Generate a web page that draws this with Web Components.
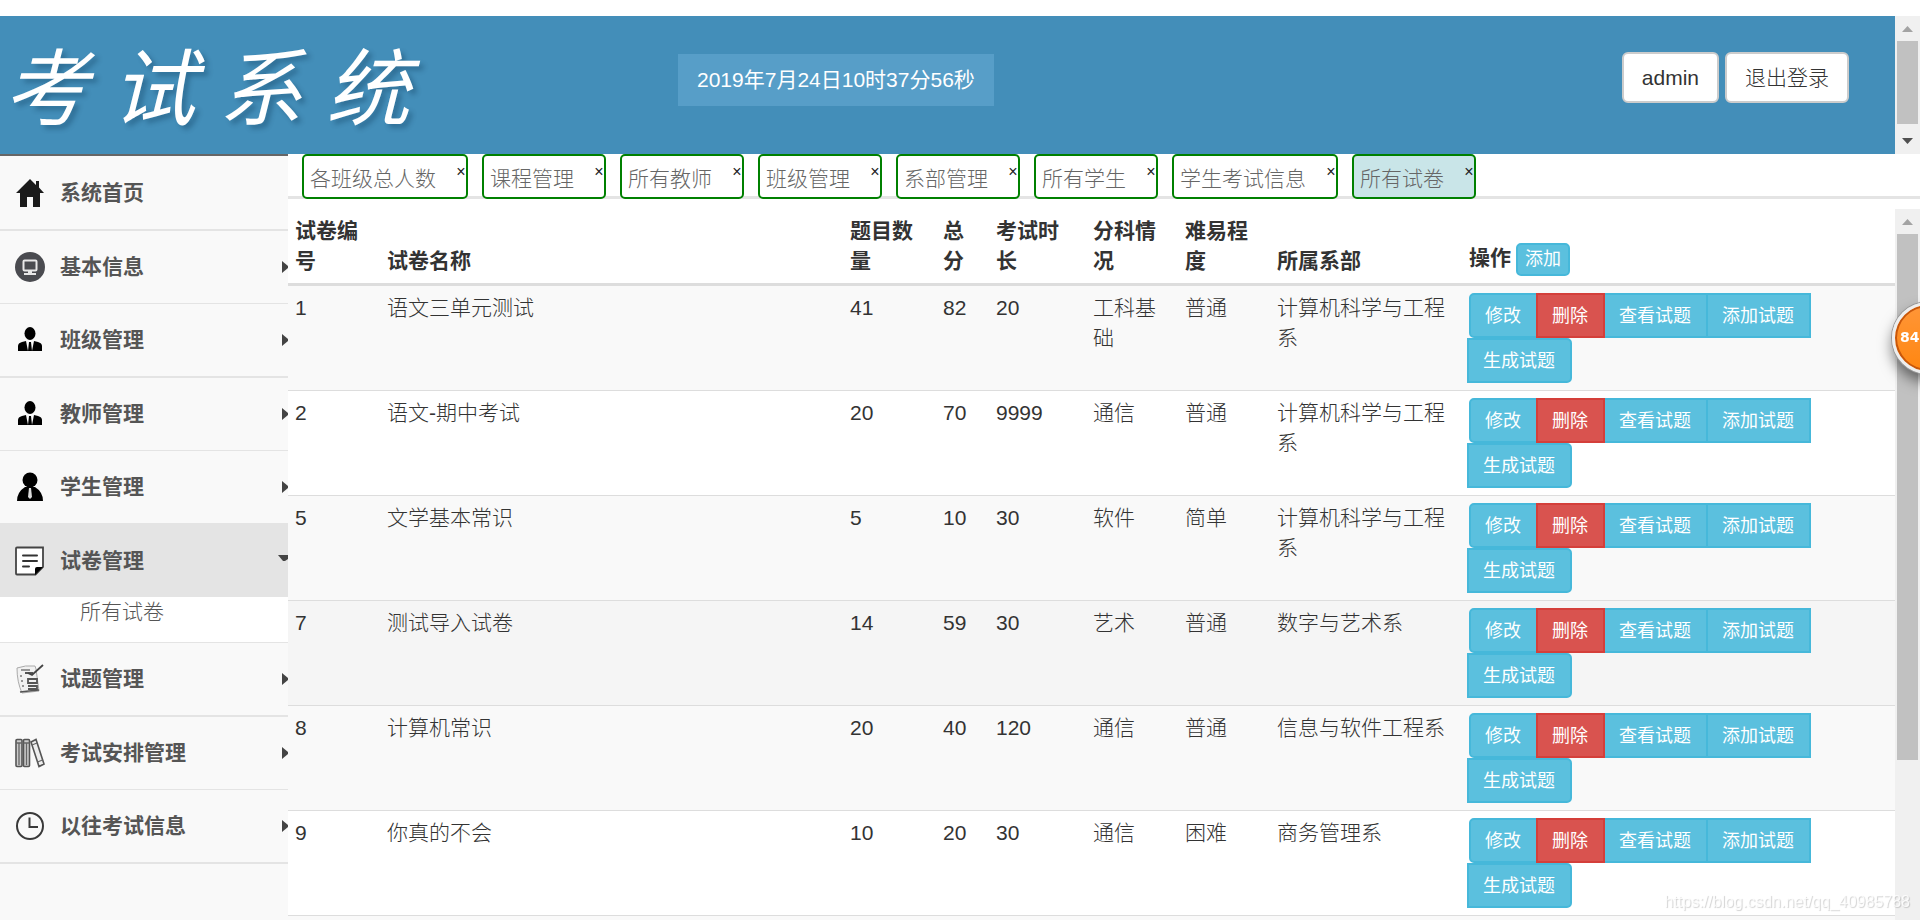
<!DOCTYPE html>
<html lang="zh-CN">
<head>
<meta charset="utf-8">
<title>考试系统</title>
<style>
html, body { margin: 0; height: 100%; overflow: hidden; }
body {
  font: 300 21px/30px "Liberation Sans", "Noto Sans CJK SC", sans-serif;
  color: #333;
  background: #fff;
}
</style>
</head>
<body>
<exam-app></exam-app>
<script>
const define = (name, html, setup) => {
  const tpl = document.createElement('template');
  tpl.innerHTML = html;
  customElements.define(name, class extends HTMLElement {
    connectedCallback() {
      if (this.shadowRoot) return;
      this.attachShadow({ mode: 'open' }).append(tpl.content.cloneNode(true));
      if (setup) setup(this, this.shadowRoot);
    }
  });
};

/* Scroll track with arrows; --thumb and --rest give the proportions */
define('scroll-track', `
<style>
:host { display: flex; flex-direction: column; flex: none; width: 25px; background: #f0f0f0; }
svg { display: block; flex: none; width: 25px; height: 25px; }
.thumb { flex: var(--thumb, 1) 1 0; margin: 0 2px; background: #c1c1c1; }
.rest { flex: var(--rest, 0) 1 0; }
.end { height: 30px; }
:host([no-end]) .end { display: none; }
</style>
<svg viewBox="0 0 25 25" aria-hidden="true"><path d="M7 16l5.500-6L18 16z" fill="#a3a3a3"/></svg>
<div class="thumb"></div>
<div class="rest"></div>
<svg class="end" viewBox="0 0 25 30" aria-hidden="true"><path d="M7 14h11l-5.500 6z" fill="#505050"/></svg>
`);

define('app-header', `
<style>
:host { display: flex; flex: none; height: 138px; background: #438eb9; }
.bar { flex: 1; min-width: 0; display: grid; grid-template-columns: 678fr 1217fr; }
h1 {
  margin: 0; padding: 26px 0 0 4px; font-size: 84px; line-height: 96px; height: 96px;
  font-style: italic; font-weight: 400; color: #fff; white-space: nowrap;
  text-shadow: 4px 4px 5px rgba(0,40,70,.3);
}
.right { display: flex; justify-content: space-between; align-items: flex-start; padding: 36px 46px 0 0; }
time { margin-top: 2px; padding: 11px 19px; background: #579ec8; color: #fff; font-weight: 400; white-space: nowrap; }
.actions { display: flex; gap: 6px; }
button {
  font: inherit; color: #333; background: #fff; border: 2px solid #ccc; border-radius: 6px;
  padding: 0 18px; height: 51px;
}
</style>
<div class="bar">
  <h1>考 试 系 统</h1>
  <div class="right">
    <time datetime="2019-07-24T10:37:56">2019年7月24日10时37分56秒</time>
    <div class="actions"><button type="button">admin</button><button type="button">退出登录</button></div>
  </div>
</div>
<scroll-track></scroll-track>
`);

const ICONS = {
  home: '<path d="M15 1L1 15h4v14h7V19h6v10h7V15h4l-5-5.500V3h-3v4z" fill="#1b1b1b"/>',
  info: '<circle cx="15" cy="15" r="15" fill="#4a4b50"/><rect x="8.500" y="8.500" width="13" height="10" rx="1" fill="none" stroke="#e8e8e8" stroke-width="2"/><path d="M13 19h4v2h4v2H9v-2h4z" fill="#e8e8e8"/>',
  person: '<ellipse cx="15" cy="8.500" rx="5.500" ry="6.500"/><path d="M3 26v-5q0-3 4-4l4-1 2 10zM27 26v-5q0-3-4-4l-4-1-2 10zM14 17h2l1 9h-4z"/>',
  student: '<circle cx="15" cy="8" r="7.500"/><path d="M2 29q0-9 8-14h10q8 5 8 14z"/><path d="M14 16h2l1 9-2 2-2-2z" fill="#ddd"/>',
  paper: '<path d="M2 1.500h26V21l-7.500 7.500H2q-1 0-1-1v-25q0-1 1-1z" fill="#fff" stroke="#444" stroke-width="1.800"/><path d="M28 21l-8 8v-6q0-2 2-2z" fill="#000"/><path d="M8 9.500h14M8 15h14M8 20.500h6" stroke="#333" stroke-width="2" stroke-linecap="round"/>',
  quiz: '<path d="M2 4q8-3 18-2l1 3 3 22-17 2Q2 18 2 4z" fill="#f1f1f1" stroke="#aaa"/><path d="M5 28q8-1 19-2" fill="none" stroke="#555" stroke-width="1.500"/><path d="M10 9h8M13 15h9v4h-9zM13 22h9v3h-9" fill="none" stroke="#555" stroke-width="1.800"/><path d="M5 12h2M6 17h2M7 22h2M6 6h9" stroke="#777" stroke-width="1.500"/><path d="M28 1L17 11l-4-2" fill="none" stroke="#444" stroke-width="1.800"/>',
  books: '<g fill="#ccc" stroke="#555" stroke-width="1.600"><rect x="1" y="1.500" width="6" height="27" rx="1"/><rect x="8.500" y="1.500" width="6" height="27" rx="1"/><path d="M16 4l5-2.500 8 24.500-5 2.500z" fill="#eee"/></g><path d="M1 5h6M8.500 5h6M17 7l5-2M22.500 24l5-2M4 5v22M11.500 5v22" stroke="#666" stroke-width="1.300"/>',
  clock: '<circle cx="15" cy="15" r="13" fill="none" stroke="#3a3a3a" stroke-width="2"/><path d="M14.500 6.500v9.500H23" fill="none" stroke="#3a3a3a" stroke-width="2"/>'
};

define('menu-item', `
<style>
:host { display: block; border-bottom: 1px solid #e4e4e4; }
:host(:nth-of-type(odd)) { border-bottom-width: 2px; }
a { display: flex; align-items: center; height: 72px; padding-left: 15px; gap: 15px;
    color: #555; font-weight: bold; text-decoration: none; overflow: hidden; }
svg { display: block; flex: none; }
.arrow { margin-left: auto; }
:host([plain]) .arrow { display: none; }
:host([open]) a { background: #e4e4e4; }
::slotted(a) { display: block; height: 45px; padding-left: 80px; background: #fff; color: #555; text-decoration: none; }
</style>
<a href="#"><svg class="icon" width="30" height="30" viewBox="0 0 30 30" aria-hidden="true"></svg><span></span><svg class="arrow" width="10" height="12" viewBox="0 0 10 12" aria-hidden="true"><path d="M4 0l6 5v2l-6 5z" fill="#444"/></svg></a>
<slot></slot>
`, (host, root) => {
  root.querySelector('.icon').innerHTML = ICONS[host.getAttribute('icon')];
  root.querySelector('span').textContent = host.getAttribute('label');
  if (host.hasAttribute('open')) root.querySelector('.arrow path').setAttribute('d', 'M0 0h10v4L7 6H5z');
});

define('side-menu', `
<style>
:host { display: block; width: 15%; flex: none; box-sizing: border-box; background: #f9f9f9;
  border-top: 2px solid #666; padding-top: 1px; overflow: hidden; }
nav { display: block; }
</style>
<nav>
  <menu-item icon="home" label="系统首页" plain></menu-item>
  <menu-item icon="info" label="基本信息"></menu-item>
  <menu-item icon="person" label="班级管理"></menu-item>
  <menu-item icon="person" label="教师管理"></menu-item>
  <menu-item icon="student" label="学生管理"></menu-item>
  <menu-item icon="paper" label="试卷管理" open><a href="#">所有试卷</a></menu-item>
  <menu-item icon="quiz" label="试题管理"></menu-item>
  <menu-item icon="books" label="考试安排管理"></menu-item>
  <menu-item icon="clock" label="以往考试信息"></menu-item>
</nav>
`);

define('page-tab', `
<style>
:host { display: flex; box-sizing: border-box; height: 45px; padding: 8px 0 0 6px;
  border: 2px solid #008000; border-radius: 5px; background: #fff; white-space: nowrap; }
:host([active]) { background: #c9e5e8; }
a { color: #666; text-decoration: none; }
button { font: inherit; font-size: 16px; line-height: 16px; height: 16px; width: 10px; margin-left: 20px;
  padding: 0; border: 0; background: none; color: #222; }
</style>
<a href="#"><slot></slot></a><button type="button" aria-label="关闭">×</button>
`);

define('tab-bar', `
<style>
:host { display: flex; flex: none; gap: 14px; height: 42px; padding-left: 14px; border-bottom: 3px solid #e4e4e4; }
</style>
<page-tab>各班级总人数</page-tab>
<page-tab>课程管理</page-tab>
<page-tab>所有教师</page-tab>
<page-tab>班级管理</page-tab>
<page-tab>系部管理</page-tab>
<page-tab>所有学生</page-tab>
<page-tab>学生考试信息</page-tab>
<page-tab active>所有试卷</page-tab>
`);

define('row-actions', `
<style>
:host { display: block; height: 90px; }
div { display: flex; }
button { font: inherit; font-weight: 400; font-size: 18px; box-sizing: border-box; height: 45px; padding: 0 15px 0 14px;
  margin: 0 0 0 -2px; border: 2px solid #46b8da; background: #5bc0de; color: #fff; white-space: nowrap; }
.first { margin-left: 0; border-radius: 5px 0 0 5px; }
.last { border-radius: 0 5px 5px 0; }
.danger { position: relative; background: #d9534f; border-color: #d43f3a; }
</style>
<div><button type="button" class="first">修改</button><button type="button" class="danger">删除</button><button type="button">查看试题</button><button type="button">添加试题</button></div>
<div><button type="button" class="last">生成试题</button></div>
`);

define('paper-table', `
<style>
:host { display: block; flex: 1; min-width: 0; overflow: hidden; }
table { width: 100%; table-layout: fixed; border-collapse: separate; border-spacing: 0; }
th, td { padding: 7px; text-align: left; vertical-align: top; }
th { vertical-align: bottom; border-bottom: 3px solid #ddd; }
td { border-bottom: 1px solid #ddd; word-break: break-all; }
tbody tr:nth-child(odd) { background: #f9f9f9; }
tbody tr.hover { background: #f5f5f5; }
tbody tr:nth-child(5) { background: #f9f9f9; }
.c92 { width: 92px; } .c93 { width: 93px; } .c53 { width: 53px; } .c97 { width: 97px; }
.dept { width: 192px; } .ops { width: 433px; }
.head { display: flex; align-items: flex-start; gap: 5px; }
.head button { font: inherit; font-weight: 400; font-size: 18px; line-height: 29px; height: 33px; padding: 0 7px;
  border: 2px solid #46b8da; border-radius: 5px; background: #5bc0de; color: #fff; }
</style>
<table>
  <colgroup><col class="c92"><col><col class="c93"><col class="c53"><col class="c97"><col class="c92"><col class="c92"><col class="dept"><col class="ops"></colgroup>
  <thead><tr><th>试卷编号</th><th>试卷名称</th><th>题目数量</th><th>总分</th><th>考试时长</th><th>分科情况</th><th>难易程度</th><th>所属系部</th>
  <th><div class="head"><span>操作</span><button type="button">添加</button></div></th></tr></thead>
  <tbody></tbody>
</table>
`, (host, root) => {
  const rows = [
    ['1', '语文三单元测试', '41', '82', '20', '工科基础', '普通', '计算机科学与工程系'],
    ['2', '语文-期中考试', '20', '70', '9999', '通信', '普通', '计算机科学与工程系'],
    ['5', '文学基本常识', '5', '10', '30', '软件', '简单', '计算机科学与工程系'],
    ['7', '测试导入试卷', '14', '59', '30', '艺术', '普通', '数字与艺术系'],
    ['8', '计算机常识', '20', '40', '120', '通信', '普通', '信息与软件工程系'],
    ['9', '你真的不会', '10', '20', '30', '通信', '困难', '商务管理系']
  ];
  const body = root.querySelector('tbody');
  for (const row of rows) {
    const tr = body.insertRow();
    if (row[0] === '7') tr.className = 'hover';
    for (const text of row) tr.insertCell().textContent = text;
    tr.insertCell().append(document.createElement('row-actions'));
  }
  body.insertRow().insertCell().colSpan = 9;
});

define('float-badge', `
<style>
:host { position: fixed; right: -44px; top: 302px; box-sizing: border-box; width: 72px; height: 72px; padding: 18px 0 0 5px;
  border: 3px solid #eee; border-radius: 50%; background: linear-gradient(#ff9638, #ff8610);
  box-shadow: inset 0 0 0 2px #c8560a, 0 0 0 1px #999, 0 8px 14px rgba(0,0,0,.5);
  color: #fff; font: bold 14px/28px "DejaVu Sans", sans-serif; }
</style>
<slot></slot>
`);

define('water-mark', `
<style>
:host { position: fixed; right: 10px; bottom: 4px; font-size: 16px; line-height: 28px; color: rgba(255,255,255,.8);
  text-shadow: 1px 1px 1px rgba(0,0,0,.18); pointer-events: none; }
</style>
<slot></slot>
`);

define('exam-app', `
<style>
:host { display: flex; flex-direction: column; box-sizing: border-box; height: 100vh; padding-top: 16px; overflow: hidden; }
.body { display: flex; flex: 1; min-height: 0; }
main { display: flex; flex-direction: column; flex: 1; min-width: 0; }
.content { display: flex; flex: 1; min-height: 0; margin-top: 10px; }
scroll-track { --thumb: 526; --rest: 160; }
</style>
<app-header></app-header>
<div class="body">
  <side-menu></side-menu>
  <main>
    <tab-bar></tab-bar>
    <div class="content"><paper-table></paper-table><scroll-track no-end></scroll-track></div>
  </main>
</div>
<float-badge>84</float-badge>
<water-mark>https://blog.csdn.net/qq_40985788</water-mark>
`);
</script>
</body>
</html>
